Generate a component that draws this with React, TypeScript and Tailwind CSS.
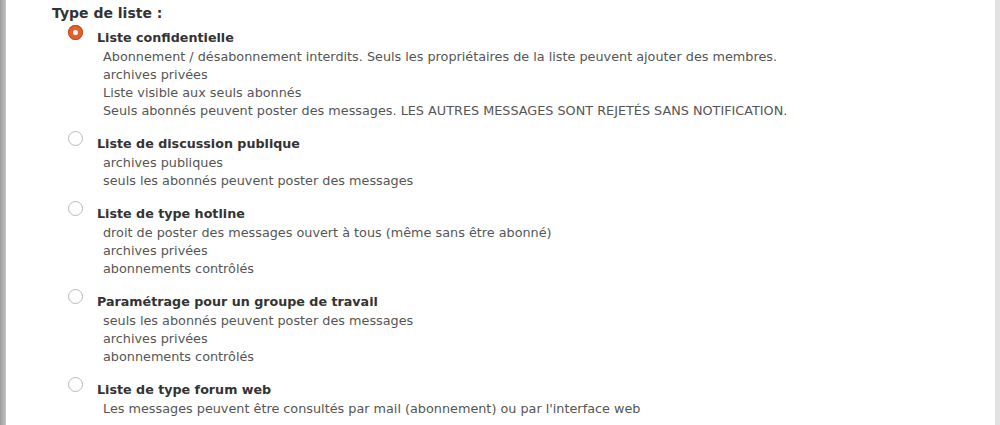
import React from "react";

const items = [
  {
    label: "Liste confidentielle",
    checked: true,
    lines: [
      "Abonnement / désabonnement interdits. Seuls les propriétaires de la liste peuvent ajouter des membres.",
      "archives privées",
      "Liste visible aux seuls abonnés",
      "Seuls abonnés peuvent poster des messages. LES AUTRES MESSAGES SONT REJETÉS SANS NOTIFICATION.",
    ],
  },
  {
    label: "Liste de discussion publique",
    checked: false,
    lines: ["archives publiques", "seuls les abonnés peuvent poster des messages"],
  },
  {
    label: "Liste de type hotline",
    checked: false,
    lines: [
      "droit de poster des messages ouvert à tous (même sans être abonné)",
      "archives privées",
      "abonnements contrôlés",
    ],
  },
  {
    label: "Paramétrage pour un groupe de travail",
    checked: false,
    lines: ["seuls les abonnés peuvent poster des messages", "archives privées", "abonnements contrôlés"],
  },
  {
    label: "Liste de type forum web",
    checked: false,
    lines: ["Les messages peuvent être consultés par mail (abonnement) ou par l'interface web"],
  },
];

function Radio({ checked }: { checked: boolean }) {
  if (checked) {
    return (
      <span className="flex h-[15px] w-[15px] items-center justify-center rounded-full bg-[#e4612d] shadow-[inset_0_0_0_1px_#c8481c]">
        <span className="h-[5px] w-[5px] rounded-full bg-white" />
      </span>
    );
  }
  return <span className="block h-[15px] w-[15px] rounded-full border border-[#b9b9b9] bg-white" />;
}

export default function App() {
  return (
    <div
      className="flex h-[425px] w-[1000px] bg-white"
      style={{ fontFamily: '"DejaVu Sans", Verdana, sans-serif' }}
    >
      <div className="w-[6px] shrink-0 bg-gradient-to-r from-[#9c9c9c] to-[#c4c4c4]" />
      <div className="flex-1 pl-[46px] pt-[3px]">
        <div className="text-[14px] font-bold leading-[20px] text-[#333]">Type de liste :</div>
        <ul className="mt-[4px] flex flex-col gap-[13px]">
          {items.map((it) => (
            <li key={it.label} className="flex">
              <div className="mt-[-2px] w-[45px] shrink-0 pl-[16px]">
                <Radio checked={it.checked} />
              </div>
              <div>
                <div className="text-[12.7px] font-bold leading-[21px] text-[#333]">{it.label}</div>
                <div className="pl-[6px] text-[12.8px] leading-[18px] text-[#555]">
                  {it.lines.map((l) => (
                    <div key={l}>{l}</div>
                  ))}
                </div>
              </div>
            </li>
          ))}
        </ul>
      </div>
      <div className="w-[5px] shrink-0 bg-[#e2e2e2]" />
    </div>
  );
}
